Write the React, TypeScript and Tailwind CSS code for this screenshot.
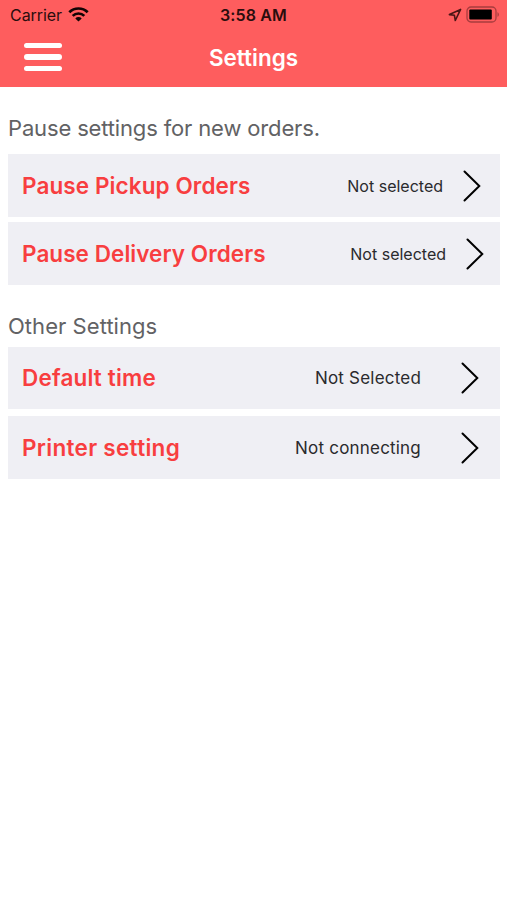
import clsx from 'clsx';

type SettingRow = {
    label: string;
    value: string;
    rowClass: string;
    labelClass: string;
    valueClass: string;
};

const pauseRows: SettingRow[] = [
    {
        label: 'Pause Pickup Orders',
        value: 'Not selected',
        rowClass: 'h-[63px] pr-[19px]',
        labelClass: 'pt-px tracking-[0.1px]',
        valueClass: 'text-[16px] mr-[20px]',
    },
    {
        label: 'Pause Delivery Orders',
        value: 'Not selected',
        rowClass: 'mt-[5px] h-[63px] pr-[16px]',
        labelClass: 'pt-px tracking-[0.06px]',
        valueClass: 'text-[16px] mr-[20px]',
    },
];

const otherRows: SettingRow[] = [
    {
        label: 'Default time',
        value: 'Not Selected',
        rowClass: 'h-[62px] pr-[21px]',
        labelClass: 'tracking-[0.17px]',
        valueClass: 'pt-[2px] text-[17px] tracking-[0.2px] mr-[40px]',
    },
    {
        label: 'Printer setting',
        value: 'Not connecting',
        rowClass: 'mt-[7px] h-[63px] pr-[21px]',
        labelClass: 'pt-px tracking-[0.3px]',
        valueClass: 'pt-[2px] text-[17px] tracking-[0.2px] mr-[40px]',
    },
];

const StatusBar = () => (
    <div className="grid h-[29px] grid-cols-3 items-center text-[16px] leading-5 text-[#2a0d0d]">
        <div className="flex items-center pl-[10px]">
            <span className="tracking-[-0.05px]">Carrier</span>
            <svg className="ml-[6px]" width="21" height="15" viewBox="0 0 21 15" fill="none" stroke="#120404" strokeWidth="2.7">
                <path d="M1.3 5.3a13 13 0 0 1 18.4 0" />
                <path d="M4.7 8.9a8.2 8.2 0 0 1 11.6 0" />
                <path d="M10.5 14.6 7.3 11.4a4.5 4.5 0 0 1 6.4 0Z" fill="#120404" stroke="none" />
            </svg>
        </div>
        <span className="text-center font-semibold tracking-[0.15px]">3:58 AM</span>
        <div className="flex items-center justify-end pr-[7px]">
            <svg className="mr-[4px]" width="14" height="14" viewBox="0 0 14 14" fill="none" stroke="#4a1515" strokeWidth="1.6" strokeLinejoin="round">
                <path d="M12.6 1.4 1.4 6.6l5 .7.9 5.2Z" />
            </svg>
            <svg width="34" height="17" viewBox="0 0 34 17">
                <rect x="1" y="1" width="29" height="15" rx="4" fill="none" stroke="#a83c3e" strokeWidth="1.3" />
                <rect x="3.3" y="3.5" width="22.5" height="10" rx="1" fill="#000" />
                <path d="M31.5 6.2c1.8.7 1.8 3.9 0 4.6Z" fill="#a83c3e" />
            </svg>
        </div>
    </div>
);

const Header = () => (
    <header className="h-[87px] bg-[#fe5d5e]">
        <StatusBar />
        <div className="grid h-[57px] grid-cols-3 items-center">
            <button type="button" aria-label="Menu" className="mb-[1px] ml-[24px] flex w-[38px] flex-col gap-[6px]">
                <span className="h-[5px] rounded-full bg-white" />
                <span className="h-[6px] rounded-full bg-white" />
                <span className="h-[5px] rounded-full bg-white" />
            </button>
            <h1 className="pt-px text-center text-[22.5px] font-semibold text-white">Settings</h1>
        </div>
    </header>
);

const SettingItem = ({ label, value, rowClass, labelClass, valueClass }: SettingRow) => (
    <button type="button" className={clsx('flex w-full items-center bg-[#efeff4] pl-[14px] text-left', rowClass)}>
        <span className={clsx('flex-1 whitespace-nowrap text-[22.5px] font-semibold text-[#f83e40]', labelClass)}>{label}</span>
        <span className={clsx('whitespace-nowrap text-[#2a2a2d]', valueClass)}>{value}</span>
        <svg width="18" height="32" viewBox="0 0 18 32" fill="none" stroke="#000" strokeWidth="2" strokeLinecap="round">
            <path d="M1.5 1.5 16.3 16 1.5 30.5" />
        </svg>
    </button>
);

export default function App() {
    return (
        <div className="min-h-[900px] w-full bg-white font-['Inter',sans-serif]">
            <Header />
            <main className="pl-[8px] pr-[7px]">
                <section className="pt-[25px]">
                    <h2 className="mb-[10px] text-[22px] leading-8 tracking-[-0.15px] text-[#626264]">Pause settings for new orders.</h2>
                    {pauseRows.map((row) => (
                        <SettingItem key={row.label} {...row} />
                    ))}
                </section>
                <section className="pt-[25px]">
                    <h2 className="mb-[5px] text-[22px] leading-8 tracking-[0.05px] text-[#626264]">Other Settings</h2>
                    {otherRows.map((row) => (
                        <SettingItem key={row.label} {...row} />
                    ))}
                </section>
            </main>
        </div>
    );
}
